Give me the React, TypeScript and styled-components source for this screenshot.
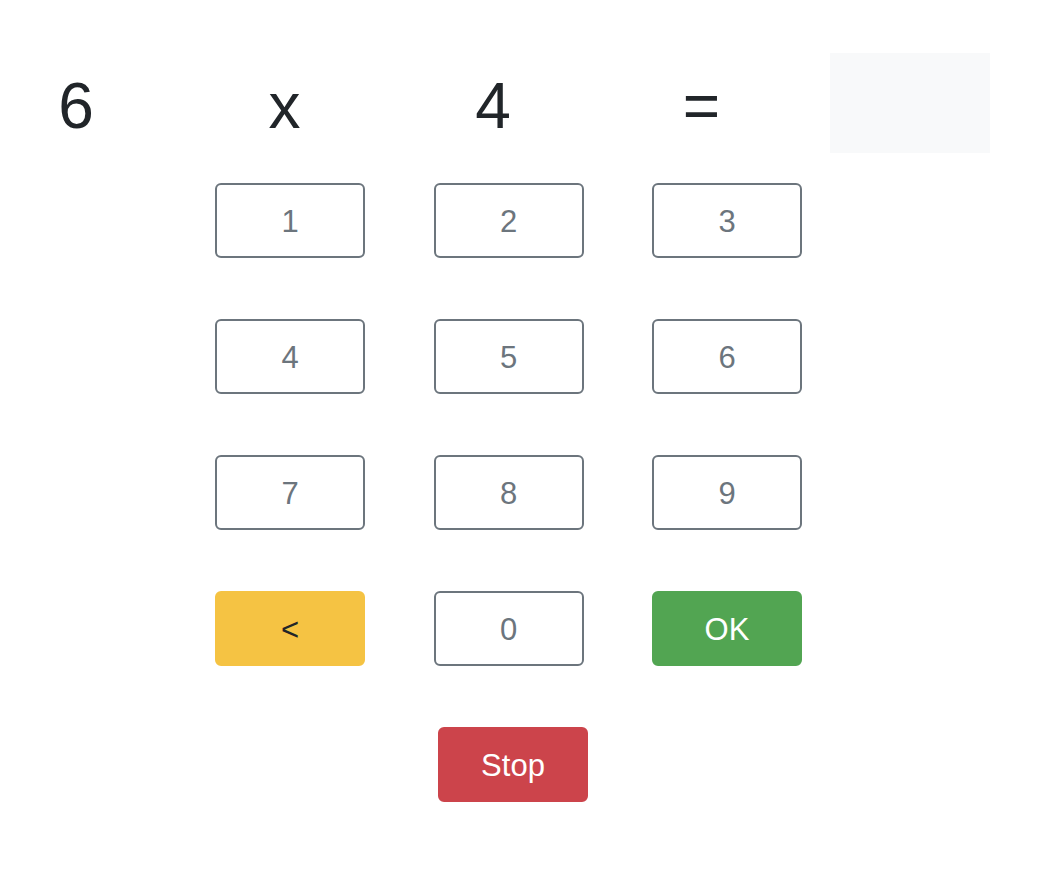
import React from "react";
import styled, { createGlobalStyle, css } from "styled-components";

const GlobalStyle = createGlobalStyle`
  html, body {
    margin: 0;
    padding: 0;
    background: #ffffff;
    font-family: "Liberation Sans", Arial, Helvetica, sans-serif;
    color: #212529;
  }
`;

const Page = styled.main`
  width: 1038px;
  min-height: 878px;
  padding-top: 53px;
  box-sizing: border-box;
`;

const Equation = styled.section`
  display: grid;
  grid-template-columns: repeat(5, 150px);
  column-gap: 58.5px;
  height: 100px;
  padding-left: 1px;
  align-items: center;
  justify-items: center;
`;

const Term = styled.span`
  font-size: 64px;
  line-height: 1.2;
  font-weight: 400;
  margin-top: 7px;
  color: #212529;
`;

const AnswerBox = styled.div`
  justify-self: stretch;
  margin: 0 -5px;
  height: 100px;
  background: #f8f9fa;
`;

const Keypad = styled.section`
  display: grid;
  grid-template-columns: repeat(3, 150px);
  column-gap: 68.5px;
  row-gap: 61px;
  margin-top: 30px;
  padding-left: 215px;
`;

type Variant = "outline" | "warning" | "success" | "danger";

const variants: Record<Variant, ReturnType<typeof css>> = {
  outline: css`
    background: #ffffff;
    color: #6c757d;
    border: 2px solid #6c757d;
  `,
  warning: css`
    background: #f5c343;
    color: #212529;
    border: 2px solid #f5c343;
  `,
  success: css`
    background: #52a552;
    color: #ffffff;
    border: 2px solid #52a552;
  `,
  danger: css`
    background: #cc444b;
    color: #ffffff;
    border: 2px solid #cc444b;
  `,
};

const Key = styled.button<{ $variant: Variant }>`
  width: 150px;
  height: 75px;
  box-sizing: border-box;
  border-radius: 6px;
  font-family: "Liberation Sans", Arial, Helvetica, sans-serif;
  font-size: 31px;
  line-height: 1;
  padding: 1px 0 0;
  display: flex;
  align-items: center;
  justify-content: center;
  cursor: pointer;
  ${(p) => variants[p.$variant]}
`;

const StopRow = styled.div`
  display: flex;
  margin-top: 61px;
  padding-left: 438px;
`;

const keys: { label: string; variant: Variant }[] = [
  { label: "1", variant: "outline" },
  { label: "2", variant: "outline" },
  { label: "3", variant: "outline" },
  { label: "4", variant: "outline" },
  { label: "5", variant: "outline" },
  { label: "6", variant: "outline" },
  { label: "7", variant: "outline" },
  { label: "8", variant: "outline" },
  { label: "9", variant: "outline" },
  { label: "<", variant: "warning" },
  { label: "0", variant: "outline" },
  { label: "OK", variant: "success" },
];

export default function App() {
  return (
    <>
      <GlobalStyle />
      <Page>
        <Equation>
          <Term>6</Term>
          <Term>x</Term>
          <Term>4</Term>
          <Term>=</Term>
          <AnswerBox />
        </Equation>
        <Keypad>
          {keys.map((k) => (
            <Key key={k.label} $variant={k.variant}>
              {k.label}
            </Key>
          ))}
        </Keypad>
        <StopRow>
          <Key $variant="danger">Stop</Key>
        </StopRow>
      </Page>
    </>
  );
}
